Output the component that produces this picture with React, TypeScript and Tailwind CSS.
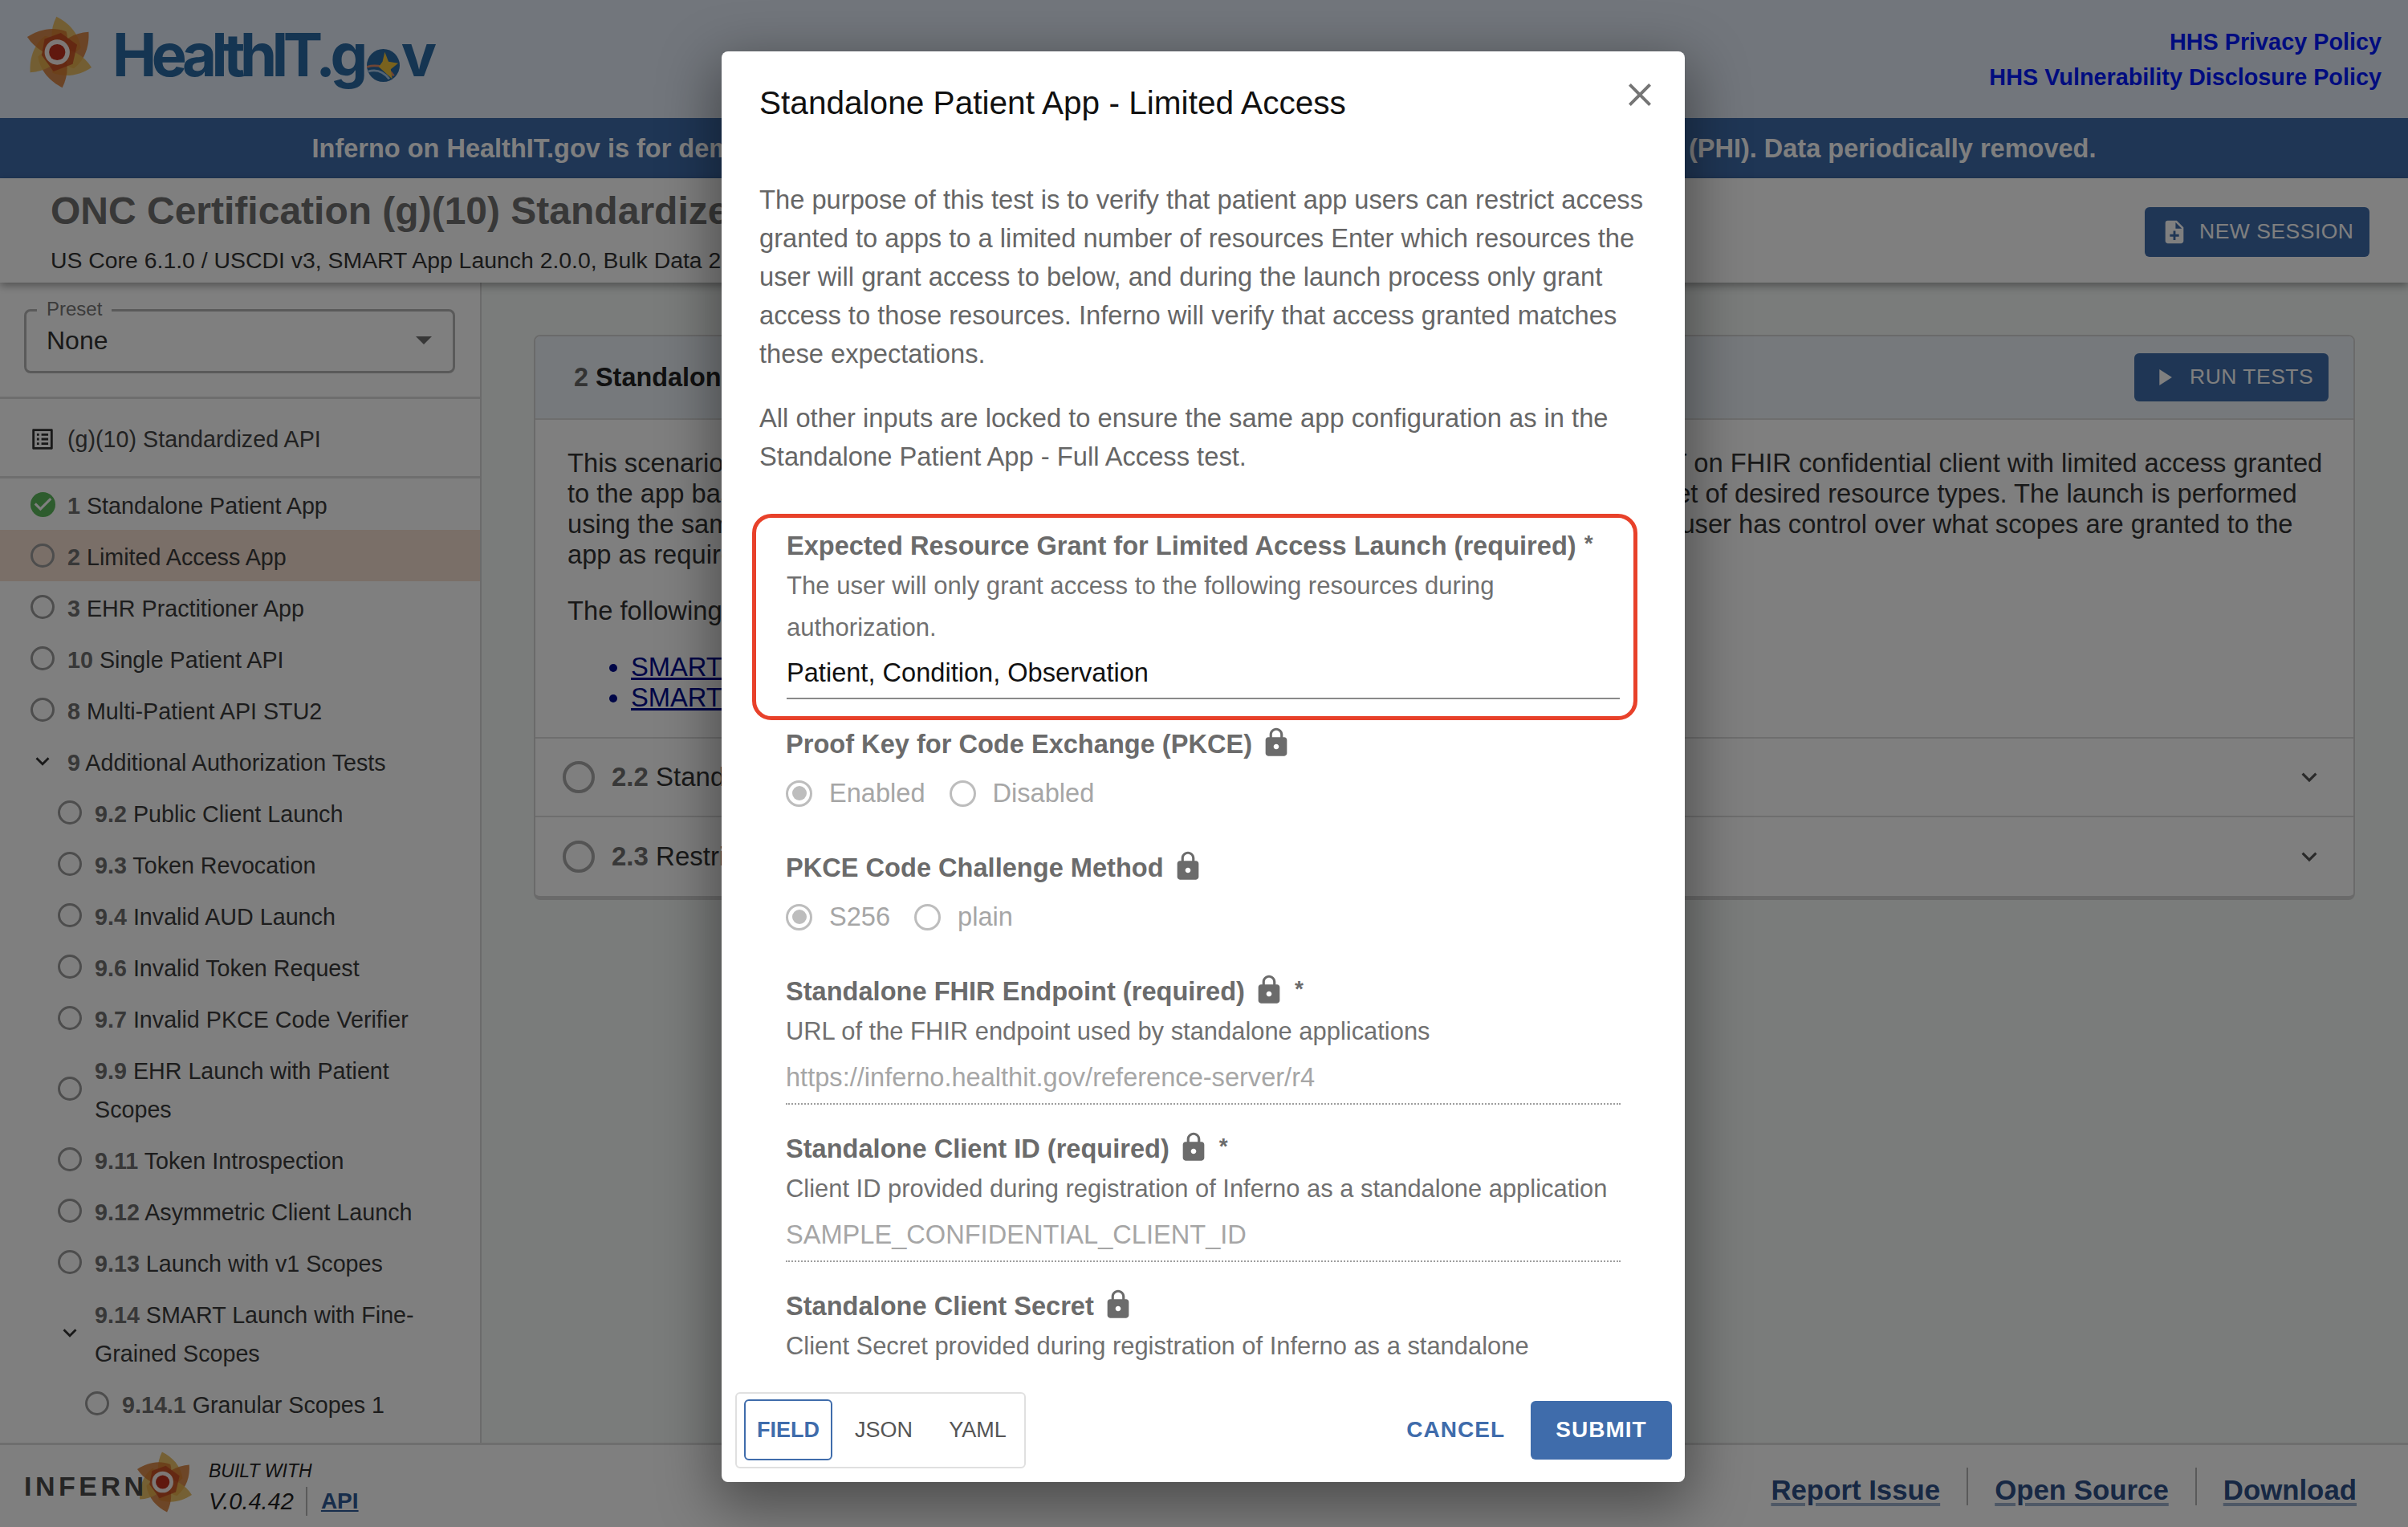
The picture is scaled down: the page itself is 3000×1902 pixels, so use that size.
import React from "react";

const LOCK = "M18 8h-1V6c0-2.76-2.24-5-5-5S7 3.24 7 6v2H6c-1.1 0-2 .9-2 2v10c0 1.1.9 2 2 2h12c1.1 0 2-.9 2-2V10c0-1.1-.9-2-2-2zm-6 9c-1.1 0-2-.9-2-2s.9-2 2-2 2 .9 2 2-.9 2-2 2zm3.1-9H8.9V6c0-1.71 1.39-3.1 3.1-3.1 1.71 0 3.1 1.39 3.1 3.1v2z";
const CHEV = "M16.59 8.59 12 13.17 7.41 8.59 6 10l6 6 6-6z";

function Icon({ d, className }: { d: string; className: string }) {
  return (
    <svg viewBox="0 0 24 24" className={className} fill="currentColor">
      <path d={d} />
    </svg>
  );
}

function Swirl({ className }: { className: string }) {
  const blade = "M46 2 C62 10 76 24 79 44 C70 54 55 56 45 50 C38 38 37 20 46 2 Z";
  const cols = ["#e8b54e", "#d5782f", "#e8b54e", "#d5782f", "#e8b54e", "#d5782f"];
  return (
    <svg viewBox="0 0 100 100" className={className}>
      {cols.map((c, i) => (
        <path key={i} d={blade} fill={c} fillOpacity={0.85} transform={`rotate(${i * 60} 50 50)`} />
      ))}
      <polygon points="52,24 74,40 68,66 42,76 26,54 30,32" fill="#c4401f" fillOpacity={0.75} />
      <circle cx="47" cy="50" r="17" fill="#ffffff" fillOpacity={0.92} />
      <circle cx="47" cy="50" r="11" fill="#c0301c" />
    </svg>
  );
}

type Row = { n: string; t: string; lvl: number; kind?: "ok" | "chev"; active?: boolean };
const rows: Row[] = [
  { n: "1", t: "Standalone Patient App", lvl: 0, kind: "ok" },
  { n: "2", t: "Limited Access App", lvl: 0, active: true },
  { n: "3", t: "EHR Practitioner App", lvl: 0 },
  { n: "10", t: "Single Patient API", lvl: 0 },
  { n: "8", t: "Multi-Patient API STU2", lvl: 0 },
  { n: "9", t: "Additional Authorization Tests", lvl: 0, kind: "chev" },
  { n: "9.2", t: "Public Client Launch", lvl: 1 },
  { n: "9.3", t: "Token Revocation", lvl: 1 },
  { n: "9.4", t: "Invalid AUD Launch", lvl: 1 },
  { n: "9.6", t: "Invalid Token Request", lvl: 1 },
  { n: "9.7", t: "Invalid PKCE Code Verifier", lvl: 1 },
  { n: "9.9", t: "EHR Launch with Patient Scopes", lvl: 1 },
  { n: "9.11", t: "Token Introspection", lvl: 1 },
  { n: "9.12", t: "Asymmetric Client Launch", lvl: 1 },
  { n: "9.13", t: "Launch with v1 Scopes", lvl: 1 },
  { n: "9.14", t: "SMART Launch with Fine-Grained Scopes", lvl: 1, kind: "chev" },
  { n: "9.14.1", t: "Granular Scopes 1", lvl: 2 },
];

function SideRow({ r }: { r: Row }) {
  const pad = r.lvl === 0 ? "pl-[36px]" : r.lvl === 1 ? "pl-[70px]" : "pl-[104px]";
  return (
    <div className={`flex items-center ${pad} pr-[60px] py-[8px] text-[28.7px] leading-[48px] text-[#3a3a3a] ${r.active ? "bg-[#f4ded0]" : ""}`}>
      <div className="w-[34px] h-[34px] shrink-0 flex items-center justify-center">
        {r.kind === "ok" ? (
          <svg viewBox="2 2 20 20" className="w-[31px] h-[31px]">
            <circle cx="12" cy="12" r="10" fill="#5cb85c" />
            <path d="M10 17l-5-5 1.41-1.41L10 14.17l7.59-7.59L19 8z" fill="#fff" />
          </svg>
        ) : r.kind === "chev" ? (
          <Icon d={CHEV} className="w-[34px] h-[34px] text-[#333]" />
        ) : (
          <div className="w-[30px] h-[30px] rounded-full border-[3px] border-[#9a9a9a]" />
        )}
      </div>
      <div className="ml-[14px] translate-y-[2px]">
        <span className="font-bold text-[#707070]">{r.n}</span> {r.t}
      </div>
    </div>
  );
}

function Radio({ on, label }: { on?: boolean; label: string }) {
  return (
    <div className="flex items-center mr-[30px]">
      <div className="w-[33px] h-[33px] rounded-full border-[3px] border-[#bdbdbd] flex items-center justify-center">
        {on && <div className="w-[18px] h-[18px] rounded-full bg-[#bdbdbd]" />}
      </div>
      <span className="ml-[21px] text-[32.6px] leading-[48px] text-[#a6a6a6]">{label}</span>
    </div>
  );
}

function FieldLabel({ text, lock, req }: { text: string; lock?: boolean; req?: boolean }) {
  return (
    <div className="flex items-center h-[40px] text-[32.6px] font-bold text-[#6b6b6b]">
      <span>{text}</span>
      {lock && <Icon d={LOCK} className="w-[40px] h-[40px] ml-[10px] -mt-[4px] text-[#6b6b6b]" />}
      {req && <span className="ml-[12px] text-[28px] -mt-[6px]">*</span>}
    </div>
  );
}

function LockedField({ label, desc, desc2, value, req }: { label: string; desc: string; desc2?: string; value: string; req?: boolean }) {
  return (
    <div className="mx-[33px]">
      <FieldLabel text={label} lock req={req} />
      <div className="mt-[10px] text-[30.9px] leading-[40px] text-[#707070] whitespace-nowrap">
        {desc}
        {desc2 && <div className="mt-[13px]">{desc2}</div>}
      </div>
      <div className="mt-[17px] text-[32.6px] leading-[40px] text-[#a6a6a6] whitespace-nowrap">{value}</div>
      <div className="mt-[12px] border-b-2 border-dotted border-[#9e9e9e]" />
    </div>
  );
}

export default function App() {
  return (
    <div className="relative w-[3000px] h-[1902px] overflow-hidden flex flex-col bg-[#f4f8f6] font-['Liberation_Sans',Arial,sans-serif]">
      {/* Header */}
      <header className="h-[147px] shrink-0 bg-[#e4ecf8] flex items-start justify-between pl-[28px] pr-[33px]">
        <div className="flex items-start pt-[16px]">
          <Swirl className="w-[92px] h-[98px]" />
          <div className="ml-[20px] mt-[2px] flex items-baseline text-[#2a6aa4] font-['Inter',sans-serif] font-bold text-[74px] leading-[100px] tracking-[-6.5px]">
            <span>HealthIT.g</span>
            <svg viewBox="0 0 44 44" className="w-[41px] h-[41px] ml-[5px] mr-[2px] self-end mb-[16px]">
              <circle cx="22" cy="22" r="22" fill="#2a6aa4" />
              <path d="M0 24c14 -4 28 0 36 12" stroke="#e08a6a" strokeWidth="3" fill="none" />
              <path d="M2 30c10 -3 20 0 28 10" stroke="#a8c8e8" strokeWidth="3" fill="none" />
              <polygon points="24,4 29,17 42,19 32,27 34,40 24,31 16,24 21,17" fill="#f2c53c" />
            </svg>
            <span>v</span>
          </div>
        </div>
        <div className="pt-[30px] text-right text-[28.8px] leading-[44px] font-bold text-[#0018ff]">
          <div>HHS Privacy Policy</div>
          <div>HHS Vulnerability Disclosure Policy</div>
        </div>
      </header>

      {/* Banner */}
      <div className="h-[75px] shrink-0 bg-[#3f6cab] flex items-center justify-center pt-[2px] text-[32.5px] font-bold text-white">
        Inferno on HealthIT.gov is for demonstration purposes only and must not contain Protected Health Information (PHI). Data periodically removed.
      </div>

      {/* Title bar */}
      <div className="relative z-10 h-[130px] shrink-0 bg-white shadow-[0_4px_10px_rgba(0,0,0,0.35)] flex items-center justify-between pl-[63px] pr-[48px]">
        <div>
          <div className="text-[48px] leading-[56px] font-bold text-[#707070] mt-[5px]">ONC Certification (g)(10) Standardized API Test Kit</div>
          <div className="text-[28.4px] leading-[40px] text-[#333] mt-[13px] whitespace-nowrap">US Core 6.1.0 / USCDI v3, SMART App Launch 2.0.0, Bulk Data 2.0.0, TLS 1.2, Bulk Data Access</div>
        </div>
        <button className="w-[280px] h-[62px] rounded-[6px] bg-[#3f6cab] flex items-center pl-[20px] text-white text-[26.5px] tracking-[0.5px] mt-[4px]">
          <Icon d="M14 2H6c-1.1 0-1.99.9-1.99 2L4 20c0 1.1.89 2 1.99 2H18c1.1 0 2-.9 2-2V8l-6-6zm2 14h-3v3h-2v-3H8v-2h3v-3h2v3h3v2zm-3-7V3.5L18.5 9H13z" className="w-[34px] h-[34px]" />
          <span className="ml-[14px]">NEW SESSION</span>
        </button>
      </div>

      {/* Body */}
      <div className="flex-1 min-h-0 flex">
        <aside className="w-[600px] shrink-0 bg-white border-r-2 border-[#d6d6d6] overflow-hidden">
          <div className="h-[145px] border-b-[3px] border-[#dcdcdc] pt-[33px] pl-[30px] pr-[31px]">
            <div className="relative h-[80px] border-[3px] border-[#b5b5b5] rounded-[8px] flex items-center pl-[25px] pb-[2px] text-[32px] text-[#333]">
              <span className="absolute -top-[17px] left-[13px] bg-white px-[12px] text-[24px] leading-[28px] text-[#777]">Preset</span>
              None
              <div className="ml-auto mr-[26px] w-0 h-0 border-l-[10px] border-r-[10px] border-t-[10px] border-l-transparent border-r-transparent border-t-[#6f6f6f]" />
            </div>
          </div>
          <div className="h-[99px] border-b-[3px] border-[#dcdcdc] flex items-center pl-[36px] text-[28.7px] text-[#444]">
            <Icon d="M19 5v14H5V5h14m1.1-2H3.9c-.5 0-.9.4-.9.9v16.2c0 .4.4.9.9.9h16.2c.4 0 .9-.5.9-.9V3.9c0-.5-.5-.9-.9-.9zM11 7h6v2h-6V7zm0 4h6v2h-6v-2zm0 4h6v2h-6zM7 7h2v2H7zm0 4h2v2H7zm0 4h2v2H7z" className="w-[34px] h-[34px] text-[#333] translate-y-[2px]" />
            <span className="ml-[14px] translate-y-[3px]">(g)(10) Standardized API</span>
          </div>
          {rows.map((r) => (
            <SideRow key={r.n} r={r} />
          ))}
        </aside>

        <main className="flex-1 min-w-0 pt-[65px] pl-[65px] pr-[66px]">
          <div className="rounded-[8px] border-2 border-[#d4d4d4] border-b-[5px] bg-white overflow-hidden">
            <div className="h-[104px] bg-[#ecf3f8] border-b-2 border-[#dcdcdc] flex items-center justify-between pl-[48px] pr-[31px]">
              <div className="text-[32.4px] font-bold text-[#222]">
                <span className="text-[#666]">2</span> Standalone Patient App - Limited Access
              </div>
              <button className="w-[242px] h-[60px] rounded-[6px] bg-[#3f6cab] flex items-center pl-[20px] text-white text-[26.5px] tracking-[0.5px]">
                <Icon d="M8 5v14l11-7z" className="w-[34px] h-[34px]" />
                <span className="ml-[15px]">RUN TESTS</span>
              </button>
            </div>
            <div className="h-[397px] border-b-2 border-[#dcdcdc] pt-[35px] pl-[40px] text-[32.7px] leading-[38px] text-[#333] whitespace-nowrap">
              <div>This scenario verifies the ability of a system, to perform a Patient Standalone Launch, to SMART on FHIR confidential client with limited access granted</div>
              <div>to the app based on user's input. The tester is expected to give the application access to a subset of desired resource types. The launch is performed</div>
              <div>using the same platform Standalone launch procedure as in the prior full access test and so the user has control over what scopes are granted to the</div>
              <div>app as required in the certification criteria.</div>
              <div className="mt-[32px]">The following implementation specifications are relevant to this scenario:</div>
              <ul className="mt-[32px] pl-[79px] list-disc text-[#000c8f] underline">
                <li>SMART App Launch 1.0</li>
                <li>SMART App Launch 2.0</li>
              </ul>
            </div>
            {["Standalone Patient App", "Restricted Resource Type Access"].map((t, i) => (
              <div key={t} className={`h-[98px] flex items-center pl-[34px] pr-[36px] ${i === 0 ? "border-b-2 border-[#dcdcdc]" : ""}`}>
                <div className="w-[40px] h-[40px] rounded-full border-[4px] border-[#a8a8a8]" />
                <div className="ml-[21px] text-[33px] text-[#333]">
                  <span className="font-bold text-[#707070]">{`2.${i + 2}`}</span> {t}
                </div>
                <Icon d={CHEV} className="ml-auto w-[38px] h-[38px] text-[#555]" />
              </div>
            ))}
          </div>
        </main>
      </div>

      {/* Footer */}
      <footer className="h-[105px] shrink-0 bg-white border-t-[3px] border-[#dcdcdc] flex items-center pl-[30px] pr-[64px]">
        <div className="relative flex items-center w-[222px]">
          <Swirl className="absolute left-[136px] -top-[22px] w-[78px] h-[84px]" />
          <span className="relative text-[34px] font-bold tracking-[4.5px] text-[#4a4a4a]">INFERN</span>
        </div>
        <div className="ml-[8px] italic text-[#222]">
          <div className="text-[23px] leading-[30px] mt-[3px]">BUILT WITH</div>
          <div className="flex items-center mt-[5px]">
            <span className="text-[29px] leading-[36px]">V.0.4.42</span>
            <span className="ml-[15px] h-[36px] border-l-2 border-[#b5b5b5]" />
            <span className="ml-[17px] not-italic font-bold text-[28px] leading-[36px] text-[#2f5a96] underline">API</span>
          </div>
        </div>
        <div className="ml-auto flex items-center text-[34.8px] font-bold text-[#2f5088]">
          {["Report Issue", "Open Source", "Download"].map((t, i) => (
            <div key={t} className={`h-[47px] flex items-center ${i > 0 ? "border-l-2 border-[#b5b5b5] ml-[33px] pl-[33px]" : ""}`}>
              <span className="underline decoration-[#9cb0cc] decoration-[4px] underline-offset-[4px] translate-y-[5px]">{t}</span>
            </div>
          ))}
        </div>
      </footer>

      {/* Modal */}
      <div className="absolute inset-0 z-20 bg-black/50 flex items-start justify-center pt-[64px] pr-[2px]">
        <div className="w-[1200px] h-[1782px] rounded-[8px] bg-white flex flex-col shadow-[0_22px_70px_8px_rgba(0,0,0,0.4)]">
          <div className="relative h-[129px] shrink-0 pl-[47px] pt-[36px] text-[40.6px] leading-[56px] text-[#111]">
            Standalone Patient App - Limited Access
            <svg viewBox="0 0 24 24" className="absolute right-[32px] top-[30px] w-[48px] h-[48px] text-[#757575]" fill="currentColor">
              <path d="M19 6.41 17.59 5 12 10.59 6.41 5 5 6.41 10.59 12 5 17.59 6.41 19 12 13.41 17.59 19 19 17.59 13.41 12z" />
            </svg>
          </div>
          <div className="flex-1 min-h-0 overflow-hidden px-[47px] pt-[32px] text-[32.7px] leading-[48px] text-[#666]">
            <p className="whitespace-nowrap">
              The purpose of this test is to verify that patient app users can restrict access<br />
              granted to apps to a limited number of resources Enter which resources the<br />
              user will grant access to below, and during the launch process only grant<br />
              access to those resources. Inferno will verify that access granted matches<br />
              these expectations.
            </p>
            <p className="mt-[32px] whitespace-nowrap">
              All other inputs are locked to ensure the same app configuration as in the<br />
              Standalone Patient App - Full Access test.
            </p>

            <div className="mt-[47px] -ml-[9px] w-[1103px] h-[257px] rounded-[24px] border-[5px] border-[#e8412a] pl-[38px] pr-[17px] pt-[15px]">
              <div className="flex items-center h-[40px] text-[32.6px] font-bold text-[#6b6b6b] whitespace-nowrap">
                Expected Resource Grant for Limited Access Launch (required)<span className="ml-[10px] text-[28px] -mt-[6px]">*</span>
              </div>
              <div className="mt-[4px] text-[31.1px] leading-[52px] text-[#707070]">
                The user will only grant access to the following resources during<br />authorization.
              </div>
              <div className="mt-[8px] text-[32.6px] leading-[44px] text-[#111]">Patient, Condition, Observation</div>
              <div className="mt-[9px] border-b-2 border-[#8a8a8a]" />
            </div>

            <div className="mx-[33px] mt-[10px]">
              <FieldLabel text="Proof Key for Code Exchange (PKCE)" lock />
              <div className="flex mt-[17px]">
                <Radio on label="Enabled" />
                <Radio label="Disabled" />
              </div>
            </div>
            <div className="mx-[33px] mt-[49px]">
              <FieldLabel text="PKCE Code Challenge Method" lock />
              <div className="flex mt-[17px]">
                <Radio on label="S256" />
                <Radio label="plain" />
              </div>
            </div>
            <div className="mt-[49px]">
              <LockedField label="Standalone FHIR Endpoint (required)" req desc="URL of the FHIR endpoint used by standalone applications" value="https://inferno.healthit.gov/reference-server/r4" />
            </div>
            <div className="mt-[35px]">
              <LockedField label="Standalone Client ID (required)" req desc="Client ID provided during registration of Inferno as a standalone application" value="SAMPLE_CONFIDENTIAL_CLIENT_ID" />
            </div>
            <div className="mt-[35px]">
              <LockedField label="Standalone Client Secret" desc="Client Secret provided during registration of Inferno as a standalone" desc2="application" value="" />
            </div>
          </div>
          <div className="h-[130px] shrink-0 flex items-center pl-[17px] pr-[16px]">
            <div className="w-[362px] h-[95px] rounded-[6px] border-2 border-[#e0e0e0] flex items-center pl-[9px] text-[27px] text-[#555]">
              <div className="w-[110px] h-[76px] rounded-[6px] border-2 border-[#3f6cab] flex items-center justify-center font-bold text-[#3f6cab]">FIELD</div>
              <div className="w-[128px] text-center">JSON</div>
              <div className="w-[110px] text-center -ml-[2px]">YAML</div>
            </div>
            <div className="ml-auto text-[28px] font-bold tracking-[1px] text-[#3f6cab]">CANCEL</div>
            <div className="ml-[32px] w-[176px] h-[73px] rounded-[6px] bg-[#3f6cab] flex items-center justify-center text-[28px] font-bold tracking-[1px] text-white">SUBMIT</div>
          </div>
        </div>
      </div>
    </div>
  );
}
